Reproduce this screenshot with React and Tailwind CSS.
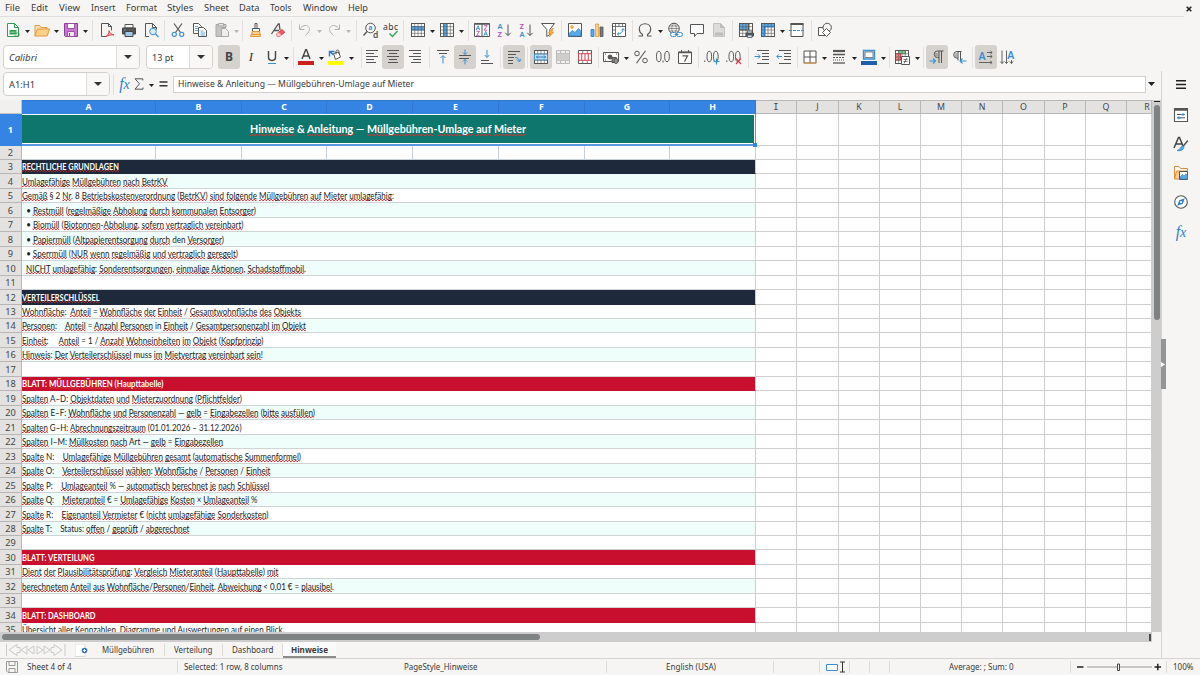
import React, { useLayoutEffect, useRef, useState } from "react";

/* Text squeezed or stretched horizontally to an exact width. */
function Fit({ w, className = "", children }) {
  const ref = useRef(null);
  const [k, setK] = useState(1);
  useLayoutEffect(() => {
    const n = ref.current.offsetWidth;
    if (n) setK(w / ref.current.getBoundingClientRect().width);
  }, []);
  return (
    <span className={"inline-block shrink-0 whitespace-pre text-left " + className} style={{ width: w }}>
      <span ref={ref} className="inline-block origin-left whitespace-pre" style={{ transform: `scaleX(${k})` }}>
        {children}
      </span>
    </span>
  );
}

const INK = "#555555";
const BLUE = "#3a8fd0";

function Ic({ children, s = 16, h }) {
  return (
    <svg width={s} height={h || s} viewBox={`0 0 ${s} ${h || s}`} fill="none" stroke={INK} strokeWidth="1" className="block shrink-0 overflow-visible">
      {children}
    </svg>
  );
}

function B({ active, w = "w-[22px]", children }) {
  return (
    <div className={`flex h-6 shrink-0 items-center justify-center rounded-[3px] ${w} ${active ? "bg-[#d5d1cd]" : ""}`}>{children}</div>
  );
}

function Arrow({ dim, w = "w-[7px]" }) {
  return (
    <div className={`flex h-6 shrink-0 items-center justify-center pt-[2px] ${w}`}>
      <svg width="5" height="3" viewBox="0 0 5 3" className="block shrink-0">
        <path d="M0 0h5L2.5 3z" fill={dim ? "#b9b7b5" : "#222"} />
      </svg>
    </div>
  );
}

function Sep({ w = "w-[5px]" }) {
  return (
    <div className={`flex shrink-0 justify-center ${w}`}>
      <div className="h-[21px] w-px bg-[#e2e0de]" />
    </div>
  );
}

/* ---- standard toolbar icons ---- */
const Grid = ({ children }) => (
  <>
    <path d="M1.5 1.5h13v13h-13z" fill="#fff" />
    {children}
    <path d="M1.5 4.700h13M1.500 8h13M1.500 11.300h13M4.700 1.500v13M8 1.500v13M11.300 1.500v13" strokeWidth=".6" />
    <path d="M1.500 1.500h13v13h-13z" />
  </>
);
const NewDoc = () => (
  <Ic>
    <path d="M2.5 1.5h7l4 4v9h-11z" fill="#fff" stroke="#2f9e4f" />
    <path d="M9.5 1.5v4h4" stroke="#2f9e4f" />
    <path d="M4.500 8h7v4.500h-7z" fill="#2f9e4f" stroke="none" />
    <path d="M4.500 10.200h7" stroke="#c9ecd2" strokeWidth=".7" />
    <path d="M9 11l5 0v3h-5" stroke="#2f9e4f" strokeWidth=".8" />
  </Ic>
);
const Folder = () => (
  <Ic>
    <path d="M1 13.500V3.500h4.500l1.500 2h6v2" fill="#fbe3bd" stroke="#e09a3c" />
    <path d="M.8 14l2.700-7h12l-2.300 7z" fill="#fbd08a" stroke="#e09a3c" />
  </Ic>
);
const Save = () => (
  <Ic>
    <path d="M1.500 1.500h13v13h-12l-1-1z" fill="#c978cf" stroke="#8e3c97" />
    <path d="M4.500 1.500h7v5h-7z" fill="#fff" stroke="#8e3c97" strokeWidth=".8" />
    <path d="M4.500 9.500h7v5h-7z" fill="#f3e3f4" stroke="#8e3c97" strokeWidth=".8" />
    <path d="M6.500 11v3.500" stroke="#8e3c97" />
  </Ic>
);
const Pdf = () => (
  <Ic>
    <path d="M7 14.500H2.500v-13h7l3 3v4M9.500 1.500v3h3" fill="none" />
    <path d="M7 14.500c2-1 3.200-3.500 3-5.800.5 2 2.500 4 5 4.200-3-.3-5.500.3-8 1.600z" fill="#f6b9bc" stroke="#d9414a" />
  </Ic>
);
const Print = () => (
  <Ic>
    <path d="M4 2.500h8V6H4z" fill="#fff" />
    <path d="M1.500 6h13v6h-13z" fill="#555" stroke="#444" />
    <path d="M4 9.500h8v5H4z" fill="#9fc8ea" stroke="#444" />
    <path d="M3 8h1.500" stroke="#5fb3f0" />
  </Ic>
);
const Preview = () => (
  <Ic>
    <path d="M6 14.500H2.500v-13h7l4 4v2M9.500 1.500v4h4" />
    <circle cx="10" cy="9.500" r="3.300" fill="#dcedfa" stroke={BLUE} />
    <path d="M12.500 12l3 3" stroke={BLUE} strokeWidth="1.200" />
  </Ic>
);
const Cut = () => (
  <Ic>
    <path d="M4 1.500l6.500 9M12 1.500l-6.500 9" strokeWidth="1.200" />
    <circle cx="4.300" cy="12.300" r="2.100" stroke={BLUE} strokeWidth="1.100" />
    <circle cx="11.700" cy="12.300" r="2.100" stroke={BLUE} strokeWidth="1.100" />
  </Ic>
);
const Copy = () => (
  <Ic>
    <path d="M1.500 1.500h5l3 3v7h-8z" fill="#fff" />
    <path d="M6.500 5.500h5l3 3v6h-8z" fill="#fff" />
    <path d="M3 4.500h3M3 6.500h3M3 8.500h3M8.500 9h3M8.500 11h4.500M8.500 13h4.500" stroke={BLUE} strokeWidth=".8" />
  </Ic>
);
const Paste = () => (
  <Ic>
    <path d="M2 2.500h10v3h-4v9H2z" fill="#c6c4c2" stroke="#aaa8a6" />
    <path d="M4.500 1.500h5v2.500h-5z" fill="#e9e7e5" stroke="#aaa8a6" />
    <path d="M7.500 6.500h4l3 3v5h-7z" fill="#eee" stroke="#aaa8a6" />
  </Ic>
);
const Brush = () => (
  <Ic>
    <path d="M7 1.500h2v5H7z" fill="#fff" />
    <path d="M4.500 6.500h7v3h-7z" fill="#fff" />
    <path d="M4.500 9.500h7l1 5h-10z" fill="#fbcf8c" stroke="#e09a3c" />
    <path d="M3 12.500h10" stroke="#e09a3c" />
  </Ic>
);
const Clear = () => (
  <Ic>
    <path d="M1.500 12L8.300 2h.9l.8 6M4 8.500h5" strokeWidth="1.300" />
    <path d="M6.500 12l5.500-4.500 2.800 2.700-5.300 4.300H7.300z" fill="#ee5a5f" stroke="#d9414a" />
    <path d="M6.500 12l2-1.600 2.800 2.700-1.800 1.400H7.300z" fill="#f9c9cb" stroke="none" />
  </Ic>
);
const Undo = ({ flip }) => (
  <Ic>
    <g transform={flip ? "translate(16 0) scale(-1 1)" : undefined} stroke="#b5b3b1">
      <path d="M2.500 2.500v5h5" />
      <path d="M2.800 7.200C5 3.500 9 2.500 11.300 4.500c2.500 2.500 1 5.500-2.800 9" />
    </g>
  </Ic>
);
const Find = () => (
  <Ic>
    <circle cx="7.500" cy="6" r="4.800" />
    <path d="M4 9.500l-3.500 4" strokeWidth="1.300" />
    <text x="5.500" y="8" fontSize="6.500" fill={BLUE} stroke="none" fontFamily="Noto Sans" fontWeight="700">a</text>
    <text x="10" y="15.500" fontSize="8.500" fill={INK} stroke="none" fontFamily="Noto Sans" fontWeight="600">d</text>
  </Ic>
);
const Spell = () => (
  <Ic>
    <text x="0" y="8" fontSize="8.500" fill="#333" stroke="none" fontFamily="Noto Sans" textLength="15">abc</text>
    <path d="M6.500 11.500l3 3 5-5.500" stroke="#31a456" strokeWidth="1.300" />
  </Ic>
);
const RowT = () => <Ic><Grid><path d="M1.500 4.700h13V8h-13z" fill="#5aa9e6" stroke={BLUE} /></Grid></Ic>;
const ColT = () => <Ic><Grid><path d="M4.700 1.500H8v13H4.700z" fill="#5aa9e6" stroke={BLUE} /></Grid></Ic>;
const L = ({ x, y, c, s = 7, children }) => (
  <text x={x} y={y} fontSize={s} fill={c} stroke="none" fontFamily="Noto Sans" fontWeight="600">{children}</text>
);
const PUR = "#b34fbb";
const AGlyph = "M0 5L2 0l2 5M.8 3.200h2.400";
const ZGlyph = "M.3 0h3.400L.3 5h3.400";
const Sort = () => (
  <Ic>
    <path d="M.5 1.500h15v13H.5z" fill="#fff" /><path d="M8 1.500v13" /><path d="M.5 2h15" strokeWidth="1.500" />
    <path d={AGlyph} transform="translate(2.200 3.700) scale(.9)" stroke={BLUE} />
    <path d={ZGlyph} transform="translate(2.200 9.300) scale(.9)" stroke={PUR} />
    <path d={ZGlyph} transform="translate(9.900 3.700) scale(.9)" stroke={PUR} />
    <path d={AGlyph} transform="translate(9.900 9.300) scale(.9)" stroke={BLUE} />
  </Ic>
);
const SortAZ = ({ desc }) => (
  <Ic>
    <L x={1.500} y={7} c={desc ? PUR : BLUE} s={7.500}>{desc ? "Z" : "A"}</L>
    <L x={1.500} y={14.800} c={desc ? BLUE : PUR} s={7.500}>{desc ? "A" : "Z"}</L>
    <path d="M12 2.500v11M9.300 10.800l2.700 2.700 2.700-2.700" />
  </Ic>
);
const Filter = () => (
  <Ic>
    <path d="M1.500 1.500h13l-4.700 6v5l-3 2v-7z" fill="#fff" />
    <path d="M12 6.500l-3.500 4.500h2.300l-1.500 4 4.500-5h-2.300l1.800-3.500z" fill="#fbb040" stroke="#e09a3c" strokeWidth=".9" />
  </Ic>
);
const Image = () => (
  <Ic>
    <path d="M1.500 1.500h13v13h-13z" fill="#fff" />
    <circle cx="5" cy="5" r="1.500" fill="#f7b25a" stroke="#e09a3c" strokeWidth=".5" />
    <path d="M2 14v-2.500l3.500-3 2.500 2 3.500-4 2.500 3V14z" fill="#5aa9e6" stroke="#2f7cc0" strokeWidth=".7" />
  </Ic>
);
const Chart = () => (
  <Ic>
    <path d="M2 7.500h3v7H2z" fill="#5aa9e6" stroke="#2f7cc0" strokeWidth=".8" />
    <path d="M6.500 2h3v12.500h-3z" fill="#fbcf8c" stroke="#e09a3c" strokeWidth=".8" />
    <path d="M11 5h3v9.500h-3z" fill="#777" strokeWidth=".8" />
  </Ic>
);
const Pivot = () => (
  <Ic>
    <path d="M1.500 1.500h13v13h-13z" fill="#fff" />
    <path d="M4.500 1.500v3h-3M4.500 4.500h10M4.500 4.500v10M8 1.500v3M11.500 1.500v3M1.500 8h3M1.500 11.500h3" strokeWidth=".8" />
    <path d="M6.500 12c3.500 0 5.500-2 5.500-5M10.500 8.300L12 6.500l1.500 1.800M8 10.500L6.300 12 8 13.500" stroke={BLUE} />
  </Ic>
);
const Omega = () => (
  <Ic><path d="M1.500 14h4v-1.500C3 11 2.300 9 2.300 7 2.300 3.800 4.800 1.800 8 1.800s5.700 2 5.700 5.200c0 2-.7 4-3.200 5.500V14h4" strokeWidth="1.100" /></Ic>
);
const Link = () => (
  <Ic>
    <circle cx="7" cy="6.500" r="5.300" />
    <path d="M1.700 6.500h10.600M7 1.200c-3 3-3 7.500 0 10.500M7 1.200c3 3 3 7.500 0 10.500M2.500 4h9M2.500 9h9" strokeWidth=".6" />
    <rect x="3.500" y="10.500" width="6" height="4" rx="2" fill="#f6f5f4" stroke={BLUE} />
    <rect x="9.500" y="10.500" width="6" height="4" rx="2" fill="#f6f5f4" stroke={BLUE} />
    <path d="M7.500 12.500h4" stroke={BLUE} />
  </Ic>
);
const Comment = () => <Ic><path d="M1.500 2.500h13v9H8l-2.500 3v-3h-4z" fill="#fff" /></Ic>;
const HeaderDoc = () => (
  <Ic>
    <path d="M2.500 1.500h7l4 4v9h-11z" fill="#dddbd9" stroke="#c4c2c0" />
    <path d="M9.500 1.500v4h4M4.500 11h7v2h-7z" fill="#c2c0be" stroke="#bbb9b7" />
  </Ic>
);
const PrintArea = () => (
  <Ic>
    <Grid><path d="M1.500 1.500h9v6.500h-9z" fill="#5aa9e6" /></Grid>
    <path d="M8 11h7.500v3H8z" fill="#555" /><path d="M9.500 9h4.500v2H9.500zM9.500 13h4.500v2.500H9.500z" fill="#cfe4f5" strokeWidth=".8" />
  </Ic>
);
const Freeze = () => (
  <Ic><Grid><path d="M1.500 1.500h13v3.200H4.700v9.800H1.500z" fill="#5aa9e6" /></Grid><path d="M4.700 4.700h10M4.700 4.700v10" stroke="#2f7cc0" strokeWidth="1.300" /></Ic>
);
const Split = () => (
  <Ic><path d="M2 1.500h12v13H2z" fill="#fff" /><path d="M1.500 2h13" strokeWidth="2" /><path d="M0 8.500h16" stroke={BLUE} strokeDasharray="3 1" /></Ic>
);
const Shapes = () => (
  <Ic>
    <path d="M1.500 5.500h8v8h-8z" fill="#fff" />
    <circle cx="10.200" cy="5.500" r="4.200" fill="#f6f5f4" />
    <path d="M9.500 6.500l4 4-4 4-4-4z" fill="#fff" />
  </Ic>
);

/* ---- formatting toolbar icons ---- */
const ALIGN = {
  left: "M2 1.500h12M2 4.500h8M2 7.500h12M2 10.500h8M2 13.500h10",
  center: "M2 1.500h12M4 4.500h8M2 7.500h12M4 10.500h8M3 13.500h10",
  right: "M2 1.500h12M6 4.500h8M2 7.500h12M6 10.500h8M4 13.500h10",
};
const Align = ({ k }) => <Ic><path d={ALIGN[k]} /></Ic>;
const VTop = () => <Ic><path d="M2 1.500h12M4 4.500h8" /><path d="M8 14.500V7M5.500 9L8 6.500 10.500 9" stroke={BLUE} /></Ic>;
const VMid = () => <Ic><path d="M2 6.500h12M2 9.500h10" /><path d="M8 .5v5M6 3.500l2 2 2-2M8 15.500v-5M6 12.500l2-2 2 2" stroke={BLUE} /></Ic>;
const VBot = () => <Ic><path d="M2 11.500h8M2 14.500h12" /><path d="M8 .8V8M5.700 6L8 8.500 10.300 6" stroke={BLUE} /></Ic>;
const Wrap = () => <Ic><path d="M2 2.500h12M2 5.500h8M2 8.500h6M2 11.500h5M2 14.500h5" /><path d="M9 8.500c2.500 0 4 1 4.500 4M11 10.500l2.500 2.500L15 10" stroke={BLUE} /></Ic>;
const Merge = () => (
  <Ic>
    <Grid />
    <path d="M1.500 5.200h13v5.600h-13z" fill="#c4e2f9" stroke={BLUE} strokeWidth=".9" />
    <path d="M3.500 8h9M5 6.500L3.500 8 5 9.500M11 6.500L12.500 8 11 9.500" stroke="#1f70b8" strokeWidth=".9" />
  </Ic>
);
const MergeDim = () => (
  <Ic><g stroke="#bcbab8"><path d="M1.500 1.500h13v13h-13zM1.500 4.700h13M1.500 11.300h13M5.500 1.500v3M10.500 1.500v3M5.500 11.500v3M10.500 11.500v3" fill="#f1efed" /><path d="M2 5h12v6H2z" fill="#d0cecc" stroke="none" /></g></Ic>
);
const SplitCells = () => (
  <Ic><path d="M1.500 1.500h13v13h-13z" fill="#fff" /><path d="M5.700 1.500v3M10.300 1.500v3M5.700 12v2.500M10.300 12v2.500" strokeWidth=".7" /><path d="M1.500 4.700h13v6.600h-13zM4.700 4.700v6.600M8 4.700v6.600M11.300 4.700v6.600" stroke="#d9414a" fill="#fff" /></Ic>
);
const Currency = () => (
  <Ic>
    <path d="M.5 3.500h15v9H.5z" fill="#fff" /><circle cx="7" cy="8" r="2" fill={INK} />
    <path d="M2 5h1M13 5h1M2 11h1" /><path d="M9 8.500h4.500v5H9z" fill="#888" /><ellipse cx="13" cy="12" rx="2" ry="2.500" fill="#999" />
  </Ic>
);
const Pct = () => <Ic><circle cx="4" cy="4.500" r="2.300" /><circle cx="12" cy="11.500" r="2.300" /><path d="M12.500 1.800l-9 12.400" strokeWidth="1.100" /></Ic>;
const Zeros = ({ plus, minus }) => (
  <Ic>
    <ellipse cx={plus || minus ? 5.300 : 3.800} cy="7.500" rx="2.300" ry="5.200" /><ellipse cx={plus || minus ? 11.800 : 12} cy="7.500" rx="2.300" ry="5.200" />
    <path d={plus || minus ? "M.8 11.500V13" : "M8 11.500V13.500"} />
    {plus && <path d="M12.500 9.500v6M9.500 12.500h6" stroke={BLUE} strokeWidth="1.200" />}
    {minus && <path d="M10 9.500l5 5.500M15 9.500l-5 5.500" stroke="#d9414a" strokeWidth="1.200" />}
  </Ic>
);
const DateI = () => (
  <Ic><path d="M1.500 3h13v11.500h-13z" fill="#fff" /><path d="M1.500 3.500h13" strokeWidth="1.500" /><path d="M4.500 1v3M11.500 1v3" /><path d="M5.500 6.800h5L7.500 12.800" strokeWidth="1.200" /></Ic>
);
const Indent = ({ out }) => (
  <Ic><path d="M3 1.500h12M8 4.500h7M8 7.500h7M8 10.500h7M3 14.500h12" /><path d={out ? "M.8 7.500H6M3 5.300L.8 7.500 3 9.700" : "M.5 7.500H6M4 5.300L6.200 7.500 4 9.700"} stroke={BLUE} /></Ic>
);
const Border = () => <Ic><path d="M2 2h12v12H2zM8 2v12M2 8h12" fill="#fff" /><path d="M1.500 14h13" stroke="#e79a45" /></Ic>;
const LineStyle = () => <Ic><path d="M2 2h12" strokeWidth="2.200" /><path d="M2 5.500h12" strokeWidth="1.500" /><path d="M2 8.500h12" strokeDasharray="2 1" /><path d="M2 11h12" strokeDasharray="1 1" /><path d="M2 14h12" strokeWidth="1.300" /></Ic>;
const BorderColor = () => <Ic><path d="M2.500 1.500h11v8.500h-11z" fill="#cfe4f5" stroke="#3a8fd0" strokeWidth="1.400" /><path d="M4 3h8v5.500H4z" fill="#fff" strokeWidth=".7" /><path d="M0 12h16v4H0z" fill="#1d5fa8" stroke="none" /></Ic>;
const Cond = () => (
  <Ic><Grid><path d="M4.700 1.500h6.600v3.200H4.700z" fill="#7fcf94" stroke="#4bae64" /><path d="M1.500 4.700h5V11h-5z" fill="#f08080" stroke="#d9414a" /></Grid><path d="M7.500 7.500h8v8h-8z" fill="#fff" /><path d="M9.500 10.500h4M9.500 12.500h4M13 9l-3 5.500" strokeWidth=".8" /></Ic>
);
const Pil = ({ rtl }) => (
  <Ic>
    <path d={rtl ? "M10.500 2.500H6a3.300 3.300 0 0 0 0 6.600h1M7 2.500v9M9.500 2.500v9" : "M14.500 2H8.500a3.300 3.300 0 0 0 0 6.600h1.500M10 2v12M12.500 2v12"} />
    <path d={rtl ? "M9 12h6.500M11.500 9.500L9 12l2.500 2.500" : "M.5 12h6M4 9.500L6.500 12 4 14.500"} stroke={BLUE} strokeWidth="1.100" />
    <path d={rtl ? "M3.500 4h3v4h-3z" : "M6 4h4v3.500H6z"} fill="#888" stroke="none" opacity=".6" />
  </Ic>
);
const TextDir = ({ v }) =>
  v ? (
    <Ic><path d="M2 1.500v13M.3 12.500L2 14.500l1.700-2M6.500 1.500v13M4.800 12.500l1.700 2 1.700-2M11.500 11v3.500M9.800 12.500l1.700 2 1.700-2" strokeWidth=".9" /><L x={7.200} y={10} c={BLUE} s={10.500}>A</L></Ic>
  ) : (
    <Ic><path d="M9 3.500h5M12.500 2l1.700 1.500L12.500 5M9 7.500h5M12.500 6l1.700 1.500L12.500 9M1 13.500h13M12.300 12l1.800 1.500-1.800 1.500" strokeWidth=".9" /><L x={.5} y={10.500} c={BLUE} s={10.500}>A</L></Ic>
  );
const FontColor = () => <Ic><path d="M4 10L7.700.8h.8L12 10M5.200 7h5.700" strokeWidth="1.400" stroke="#444" /><path d="M0 12h16v4H0z" fill="#c9211e" stroke="none" /></Ic>;
const Highlight = () => (
  <Ic><path d="M5.500 4.500l5-1.500 2 5-5 2.500z" fill="#fff" /><path d="M8 5.500V2.500C8 .5 11 .5 11 2.500V5" /><path d="M1.500 7.500v-5h5M2.500 3l3 3" stroke="#2f7cc0" strokeWidth="1.500" /><path d="M0 12h16v4H0z" fill="#ff0" stroke="none" /></Ic>
);
const U = () => (
  <Ic><path d="M4.500 2v6.300c0 4.200 7 4.200 7 0V2" strokeWidth="1.400" stroke="#444" /><path d="M4 14.500h8" stroke={BLUE} /></Ic>
);
const Fx = () => <span className="font-['Liberation_Serif',serif] text-[16px] leading-none text-[#2c82c9] italic">f<span className="text-[14px]">x</span></span>;

function Combo({ text, tw, italic, w, aw, cls = "" }) {
  return (
    <div className={`flex h-[24px] shrink-0 items-center rounded-[4px] border border-[#d2cfcc] bg-white ${w} ${cls}`}>
      <div className={`flex flex-1 items-center pl-[5px] text-[9.300px] leading-[13px] ${italic ? "italic" : ""}`}><Fit w={tw}>{text}</Fit></div>
      <div className={`flex h-full items-center justify-center rounded-r-[3px] border-l border-[#dedbd9] bg-[#f9f8f7] ${aw}`}>
        <svg width="8" height="4" viewBox="0 0 8 4"><path d="M0 0h8L4 4z" fill="#333" /></svg>
      </div>
    </div>
  );
}

/* ---- sheet data ---- */
const COL_EDGE = [21, 155, 241, 326, 412, 498, 584, 669, 755, 796, 838, 879, 920, 961, 1002, 1044, 1085, 1126, 1151];
const COLS = "ABCDEFGHIJKLMNOPQR".split("").map((c, i) => ({ c, w: COL_EDGE[i + 1] - COL_EDGE[i] }));
const edge = (n) => (n === 1 ? 145 : Math.floor(159.3 + (n - 2) * 14.47));
const N = "navy", R = "red";
const ROWS = {
  3: ["RECHTLICHE GRUNDLAGEN", 97, N],
  4: ["Umlagefähige Müllgebühren nach BetrKV", 145.5],
  5: ["Gemäß § 2 Nr. 8 Betriebskostenverordnung (BetrKV) sind folgende Müllgebühren auf Mieter umlagefähig:", 372],
  6: ["  • Restmüll (regelmäßige Abholung durch kommunalen Entsorger)", 234],
  7: ["  • Biomüll (Biotonnen-Abholung, sofern vertraglich vereinbart)", 221.5],
  8: ["  • Papiermüll (Altpapierentsorgung durch den Versorger)", 202],
  9: ["  • Sperrmüll (NUR wenn regelmäßig und vertraglich geregelt)", 216],
  10: ["  NICHT umlagefähig: Sonderentsorgungen, einmalige Aktionen, Schadstoffmobil.", 284],
  12: ["VERTEILERSCHLÜSSEL", 77.5, N],
  13: ["Wohnfläche:  Anteil = Wohnfläche der Einheit / Gesamtwohnfläche des Objekts", 279],
  14: ["Personen:    Anteil = Anzahl Personen in Einheit / Gesamtpersonenzahl im Objekt", 284],
  15: ["Einheit:     Anteil = 1 / Anzahl Wohneinheiten im Objekt (Kopfprinzip)", 241.5],
  16: ["Hinweis: Der Verteilerschlüssel muss im Mietvertrag vereinbart sein!", 241],
  18: ["BLATT: MÜLLGEBÜHREN (Haupttabelle)", 141.5, R],
  19: ["Spalten A–D: Objektdaten und Mieterzuordnung (Pflichtfelder)", 220],
  20: ["Spalten E–F: Wohnfläche und Personenzahl — gelb = Eingabezellen (bitte ausfüllen)", 293],
  21: ["Spalten G–H: Abrechnungszeitraum (01.01.2026 – 31.12.2026)", 219.5],
  22: ["Spalten I–M: Müllkosten nach Art — gelb = Eingabezellen", 201],
  23: ["Spalte N:    Umlagefähige Müllgebühren gesamt (automatische Summenformel)", 279],
  24: ["Spalte O:    Verteilerschlüssel wählen: Wohnfläche / Personen / Einheit", 248.5],
  25: ["Spalte P:    Umlageanteil % — automatisch berechnet je nach Schlüssel", 247.5],
  26: ["Spalte Q:    Mieteranteil € = Umlagefähige Kosten × Umlageanteil %", 235.5],
  27: ["Spalte R:    Eigenanteil Vermieter € (nicht umlagefähige Sonderkosten)", 246.5],
  28: ["Spalte T:    Status: offen / geprüft / abgerechnet", 167.5],
  30: ["BLATT: VERTEILUNG", 72.5, R],
  31: ["Dient der Plausibilitätsprüfung: Vergleich Mieteranteil (Haupttabelle) mit", 256.5],
  32: ["berechnetem Anteil aus Wohnfläche/Personen/Einheit. Abweichung < 0,01 € = plausibel.", 312],
  34: ["BLATT: DASHBOARD", 73.5, R],
  35: ["Übersicht aller Kennzahlen, Diagramme und Auswertungen auf einen Blick.", 262.5],
};
const KNOWN = new Set(["den", "in", "Art", "Status", "muss", "BLATT", "DASHBOARD"]);

/* Words unknown to the spell checker get a red zigzag along their foot. */
function Spelled({ text }) {
  return text.split(/([A-Za-zÄÖÜäöüß]+)/).map((p, i) =>
    i % 2 && p.length > 1 && !KNOWN.has(p) ? (
      <span key={i} className="bg-[image:linear-gradient(90deg,#d8342f_50%,transparent_50%),linear-gradient(90deg,#d8342f_50%,transparent_50%)] bg-[length:4px_1px] bg-[position:0_100%,2px_calc(100%_-_1px)] bg-repeat-x">{p}</span>
    ) : (
      <span key={i}>{p}</span>
    )
  );
}

function Row({ n }) {
  const h = edge(n) - (n === 1 ? 113 : edge(n - 1));
  const d = ROWS[n];
  const bg = d && d[2] === N ? "bg-[#1e293b]" : d && d[2] === R ? "bg-[#c8102e]" : d && n % 2 === 0 ? "bg-[#effdfb]" : "bg-white";
  return (
    <div className="flex shrink-0" style={{ height: h }}>
      <div className={`flex w-[22px] shrink-0 items-center justify-center border-r border-b pt-px text-[9.200px] leading-none ${n === 1 ? "border-[#3584e4] bg-[#3584e4] font-bold text-white" : "border-[#b9b7b5] bg-[#e3e2e1] text-[#454545]"}`}>{n}</div>
      {n === 1 ? (
        <div className="relative flex w-[734px] shrink-0 border-r border-b-2 border-[#5b97de]">
          <div className="flex flex-1 items-center justify-center border-y border-r border-white bg-[#0f766e] pb-px font-['Lato',sans-serif] text-[12px] leading-none font-bold text-white">
            <Fit w={276} className="leading-[16px]"><Spelled text="Hinweise & Anleitung — Müllgebühren-Umlage auf Mieter" /></Fit>
          </div>
          <div className="absolute -right-[2px] -bottom-[3px] h-1 w-1 bg-[#3584e4]" />
        </div>
      ) : n === 2 ? (
        COLS.slice(0, 8).map((c) => <div key={c.c} className="shrink-0 border-r border-b border-[#c9cfd6] bg-white" style={{ width: c.w }} />)
      ) : (
        <div className={`flex w-[734px] shrink-0 items-center overflow-hidden border-r border-b border-r-[#cfcfcf] font-['Lato',sans-serif] text-[10px] leading-none ${d && d[2] ? "border-b-transparent font-bold text-white" : "border-b-[#d0d3d3] text-[#1c1c1c]"} ${bg}`}>
          {d && <Fit w={d[1]} className="leading-[13px]"><Spelled text={d[0]} /></Fit>}
        </div>
      )}
      {COLS.slice(8).map((c) => <div key={c.c} className="shrink-0 border-r border-b border-[#cfcfcf] bg-white" style={{ width: c.w }} />)}
    </div>
  );
}

const MENU = [["File", 15, "ml-[5px]"], ["Edit", 17, "ml-[11px]"], ["View", 21, "ml-[10.500px]"], ["Insert", 24.5, "ml-[11px]"], ["Format", 31, "ml-[10.500px]"], ["Styles", 26.5, "ml-[10px]"], ["Sheet", 25, "ml-[11px]"], ["Data", 20.5, "ml-[10px]"], ["Tools", 21.5, "ml-[10.500px]"], ["Window", 34.5, "ml-[11px]"], ["Help", 20, "ml-[10.500px]"]];

const Bar = ({ w }) => <div className={`flex h-3 shrink-0 justify-end ${w}`}><div className="w-px bg-[#dcdad8]" /></div>;

export default function App() {
  return (
    <div className="flex h-[675px] w-[1200px] flex-col overflow-hidden bg-[#f6f5f4] font-['Noto_Sans',sans-serif] text-[9.300px] leading-[12px] text-[#3a3a3a]">
      {/* menu bar */}
      <div className="flex h-[17px] shrink-0">
        <div className="flex flex-1 items-center border-b border-[#e0dedc]">
          {MENU.map(([t, w, m]) => <Fit key={t} w={w} className={m}>{t}</Fit>)}
        </div>
        <div className="flex w-[16px] items-center pl-[2px]">
          <svg width="6" height="6" viewBox="0 0 6 6"><path d="M.7.7l4.600 4.600M5.300.7L.7 5.300" stroke="#222" strokeWidth="1.600" /></svg>
        </div>
      </div>

      {/* standard toolbar */}
      <div className="flex h-[27px] shrink-0 items-center pb-px pl-[2px]">
        <B><NewDoc /></B><Arrow /><B><Folder /></B><Arrow /><B><Save /></B><Arrow /><Sep w="w-[7px]" />
        <B><Pdf /></B><B><Print /></B><B><Preview /></B><Sep />
        <B><Cut /></B><B><Copy /></B><B><Paste /></B><Arrow dim /><Sep />
        <B><Brush /></B><B><Clear /></B><Sep />
        <B><Undo /></B><Arrow dim /><B><Undo flip /></B><Arrow dim /><Sep w="w-[8px]" />
        <B><Find /></B><B w="w-[18px]"><Spell /></B><Sep w="w-[7px]" />
        <B><RowT /></B><Arrow /><B><ColT /></B><Arrow /><Sep w="w-[6px]" />
        <B><Sort /></B><B><SortAZ /></B><B><SortAZ desc /></B><B><Filter /></B><Sep w="w-[5px]" />
        <B><Image /></B><B><Chart /></B><B><Pivot /></B><Sep w="w-[4px]" />
        <B><Omega /></B><Arrow w="w-[8px]" /><B><Link /></B><B><Comment /></B><B><HeaderDoc /></B><Sep />
        <B><PrintArea /></B><B><Freeze /></B><Arrow /><B><Split /></B><Sep w="w-[6px]" /><B><Shapes /></B>
      </div>

      {/* formatting toolbar */}
      <div className="flex h-[27px] shrink-0 items-center pb-px pl-[3px]">
        <Combo text="Calibri" tw={28} italic w="w-[137px]" aw="w-[23px]" />
        <Combo text="13 pt" tw={21.5} w="w-[67px]" aw="w-[23px]" cls="ml-[6px]" />
        <div className="w-[5px]" />
        <B active><span className="text-[12px] font-bold text-[#444]">B</span></B>
        <B><span className="font-['Liberation_Serif',serif] text-[13px] text-[#333] italic">I</span></B>
        <B w="w-[20px]"><U /></B><Arrow w="w-[9px]" /><Sep w="w-[4px]" />
        <B><FontColor /></B><Arrow w="w-[8px]" /><B><Highlight /></B><Arrow w="w-[8px]" /><Sep w="w-[12px]" />
        <B w="w-[15px]"><div className="-ml-[6px]"><Align k="left" /></div></B><B active><Align k="center" /></B><B><Align k="right" /></B><Sep w="w-[6px]" />
        <B><VTop /></B><B active><VMid /></B><B><VBot /></B><Sep w="w-[5px]" />
        <B active><Wrap /></B><Sep w="w-[5px]" />
        <B active><Merge /></B><B><MergeDim /></B><B><SplitCells /></B><Sep w="w-[4px]" />
        <B><Currency /></B><Arrow w="w-[8px]" /><B><Pct /></B><B><Zeros /></B><B><DateI /></B><Sep w="w-[5px]" />
        <B><Zeros plus /></B><B><Zeros minus /></B><Sep w="w-[6px]" />
        <B><Indent /></B><B><Indent out /></B><Sep w="w-[4px]" />
        <B><Border /></B><Arrow /><B><LineStyle /></B><Arrow w="w-[8px]" /><B><BorderColor /></B><Arrow w="w-[7px]" /><Sep w="w-[4px]" />
        <B><Cond /></B><Arrow w="w-[8px]" /><Sep w="w-[5px]" />
        <B active><Pil /></B><B><Pil rtl /></B><Sep w="w-[5px]" />
        <B active><TextDir /></B><B><TextDir v /></B>
      </div>

      <div className="flex h-[587px] shrink-0">
        <div className="flex w-[1161px] shrink-0 flex-col">
          {/* formula bar */}
          <div className="flex h-[29px] shrink-0 items-center pb-[3px] pl-[3px]">
            <Combo text="A1:H1" tw={26} w="w-[107px]" aw="w-[23px]" />
            <Sep w="w-[6px]" />
            <div className="flex w-[17px] justify-center"><Fx /></div>
            <svg width="10" height="12" viewBox="0 0 10 12" className="ml-px shrink-0"><path d="M8.800 2.500V.8H1l4.500 5L1 11.200h8V9.500" fill="none" stroke="#555" /></svg>
            <Arrow w="w-[14px]" />
            <svg width="9" height="6" viewBox="0 0 9 6" className="ml-[1px] shrink-0"><path d="M.5 1h8M.5 4.800h8" stroke="#333" strokeWidth="1.400" /></svg>
            <div className="ml-[5px] flex h-[17px] w-[973px] shrink-0 items-center border border-[#d2cfcc] bg-white pl-[4px] text-[9.300px]">
              <Fit w={236}>Hinweise &amp; Anleitung — Müllgebühren-Umlage auf Mieter</Fit>
            </div>
            <svg width="7" height="4" viewBox="0 0 7 4" className="ml-[2px] shrink-0"><path d="M0 0h7L3.500 4z" fill="#222" /></svg>
          </div>

          {/* sheet */}
          <div className="flex h-[532px] shrink-0">
            <div className="flex w-[1152px] shrink-0 flex-col overflow-hidden">
              <div className="flex h-[14px] shrink-0">
                <div className="w-[22px] shrink-0 border-r border-b border-[#c4c2c0] bg-[#f1f0ef]" />
                {COLS.map((c, i) => (
                  <div key={c.c} style={{ width: c.w }} className={`flex shrink-0 items-center justify-center overflow-hidden border-t border-r border-b text-[8.800px] ${i < 8 ? "border-[#2f77cf] border-b-[#3584e4] bg-[#3584e4] font-bold text-white" : "border-[#b9b7b5] bg-[#e3e2e1] text-[#454545]"} ${c.c === "I" ? "font-['DejaVu_Sans_Mono',monospace]" : ""} ${c.c === "R" ? "pl-[16px]" : ""}`}>{c.c}</div>
                ))}
              </div>
              {Array.from({ length: 35 }, (_, i) => <Row key={i} n={i + 1} />)}
            </div>
            <div className="flex w-[9px] shrink-0 flex-col items-center bg-[#cdcdcd] pt-px">
              <div className="h-px w-[6px] bg-[#222]" />
              <div className="mt-[3px] h-[215px] w-[6px] rounded-full bg-[#7f8282]" />
            </div>
          </div>

          {/* horizontal scroll bar */}
          <div className="flex h-[10px] w-[1152px] shrink-0 items-center bg-[#cdcdcd] pl-[2px]">
            <div className="h-[6px] w-[538px] rounded-full bg-[#7f8282]" />
            <div className="mr-px ml-auto h-[7px] w-[2px] bg-[#4a4a4a]" />
          </div>

          {/* sheet tabs */}
          <div className="flex h-[16px] shrink-0 items-center">
            <svg width="62" height="14" viewBox="0 0 62 14" fill="none" stroke="#cbc9c7" className="ml-[5px] shrink-0">
              <path d="M1.500 1v12M12 1.500L4 7l8 5.500v-3h3v-5h-3zM22 3l-6 4 6 4zM29 3l-6 4 6 4zM32 3l6 4-6 4zM39 3l6 4-6 4zM49 1.500L57 7l-8 5.500v-3h-3v-5h3zM60 1v12" />
            </svg>
            <svg width="16" height="13" viewBox="0 0 16 13" className="ml-[8px] shrink-0"><path d="M0 0h10v12.500H0z" fill="#fff" stroke="#dedcda" /><circle cx="9.500" cy="6.500" r="2.800" fill="#3573b9" /><path d="M9.500 5v3M8 6.500h3" stroke="#fff" strokeWidth=".9" /></svg>
            <Fit w={52} className="ml-[11px]">Müllgebühren</Fit>
            <Bar w="w-[10.500px]" /><Fit w={38.5} className="ml-[9.500px]">Verteilung</Fit>
            <Bar w="w-[10px]" /><Fit w={41.5} className="ml-[9.500px]">Dashboard</Fit>
            <Bar w="w-[9.500px]" />
            <div className="flex h-full w-[53px] items-center justify-center border-b-2 border-[#8c8c8c] bg-[#fafafa] pt-[2px] font-bold"><Fit w={37}>Hinweise</Fit></div>
          </div>
        </div>

        {/* sidebar */}
        <div className="relative flex w-[39px] shrink-0 flex-col items-center border-l border-[#d6d4d2] pt-[5px]">
          <div className="flex h-[17px] items-center"><svg width="10" height="9" viewBox="0 0 10 9"><path d="M0 .8h10M0 4.500h10M0 8.200h10" stroke="#222" strokeWidth="1.400" /></svg></div>
          <div className="mt-[14px] flex h-[16px] items-center"><Ic><path d="M1.500 1.500h13v13h-13z" fill="#fff" strokeWidth="1.100" /><path d="M1.500 2.500h13" strokeWidth="2.500" /><path d="M4 7.500h8M4 10.800h8" /><path d="M8 7.500h4M10 6v3M4 10.800h4M6 9.300v3" stroke={BLUE} /></Ic></div>
          <div className="mt-[13px] flex h-[16px] items-center"><Ic><path d="M1 12L5.500 1.500h1L10 10M2.800 8h6" strokeWidth="1.500" stroke="#444" /><path d="M14.800 4.500L10 10.500" strokeWidth="1.500" /><path d="M4 14.500c3 0 3-3.500 5.500-4.500l1.500 1.500c-1 3-4 3.500-7 3z" fill="#5aa9e6" stroke={BLUE} /></Ic></div>
          <div className="mt-[13px] flex h-[16px] items-center"><Ic><path d="M1.500 14V1.500H6L7.500 3.500h7V6" fill="#fff" stroke="#e08a3c" /><path d="M1.500 14L3.500 6h11v8z" fill="#fbcf8c" stroke="#e08a3c" /><path d="M6.500 6.500h8v8h-8z" fill="#fff" /><path d="M7 14v-2l2.500-2.500 1.500 1.500 2-2 1.500 1.500V14z" fill="#5aa9e6" stroke="#2f7cc0" strokeWidth=".6" /></Ic></div>
          <div className="mt-[13px] flex h-[16px] items-center"><Ic><circle cx="8" cy="8" r="6.300" fill="#fff" strokeWidth="1.100" /><path d="M11.800 4.200L9.800 9.800 4.200 11.800 6.200 6.200z" fill="#2c82c9" stroke="none" /><circle cx="8" cy="8" r="1.100" fill="#fff" stroke="none" /></Ic></div>
          <div className="mt-[13px] flex h-[18px] items-center text-[#2c82c9]"><Fx /></div>
          <div className="absolute top-[268px] -left-px flex h-[50px] w-[5px] items-center bg-[#949696]"><svg width="4" height="5" viewBox="0 0 4 5"><path d="M0 0l4 2.500L0 5z" fill="#fff" /></svg></div>
        </div>
      </div>

      {/* status bar */}
      <div className="flex h-[17px] shrink-0 items-center border-t border-[#d6d4d2] pl-[6px]">
        <svg width="12" height="12" viewBox="0 0 12 12" fill="none" stroke="#9a9896" className="shrink-0"><path d="M.5.5h11v11H2L.5 10zM3 .5v4h6v-4M3 11.500v-4h6v4" /></svg>
        <Fit w={44.5} className="ml-[9px]">Sheet 4 of 4</Fit>
        <Bar w="w-[106px]" /><Fit w={98.500} className="ml-[6px]">Selected: 1 row, 8 columns</Fit>
        <Fit w={73.500} className="ml-[122px]">PageStyle_Hinweise</Fit>
        <Bar w="w-[129px]" /><Fit w={50} className="ml-[59.500px]">English (USA)</Fit>
        <Bar w="w-[57.500px]" /><Bar w="w-[46px]" />
        <svg width="20" height="12" viewBox="0 0 20 12" fill="none" className="ml-[6px] shrink-0"><path d="M.5 3.500h11v6H.5z" fill="#fff" stroke={BLUE} /><path d="M14 1h5M16.500 1v10M14 11h5" stroke="#333" /></svg>
        <Bar w="w-[4px]" /><Bar w="w-[20px]" /><Bar w="w-[20px]" />
        <Fit w={64.500} className="ml-[59px]">Average: ; Sum: 0</Fit>
        <Bar w="w-[58px]" />
        <svg width="84" height="10" viewBox="0 0 84 10" fill="none" className="ml-[6px] shrink-0">
          <path d="M0 5h6.500M77.500 5h6.500M80.800 1.800v6.500" stroke="#222" strokeWidth="1.500" /><path d="M10 5h65" stroke="#9a9896" /><path d="M40.500 2h2v6.500h-2z" fill="#fff" stroke="#444" />
        </svg>
        <Bar w="w-[6px]" /><Fit w={20.500} className="ml-[6px]">100%</Fit>
      </div>
    </div>
  );
}
